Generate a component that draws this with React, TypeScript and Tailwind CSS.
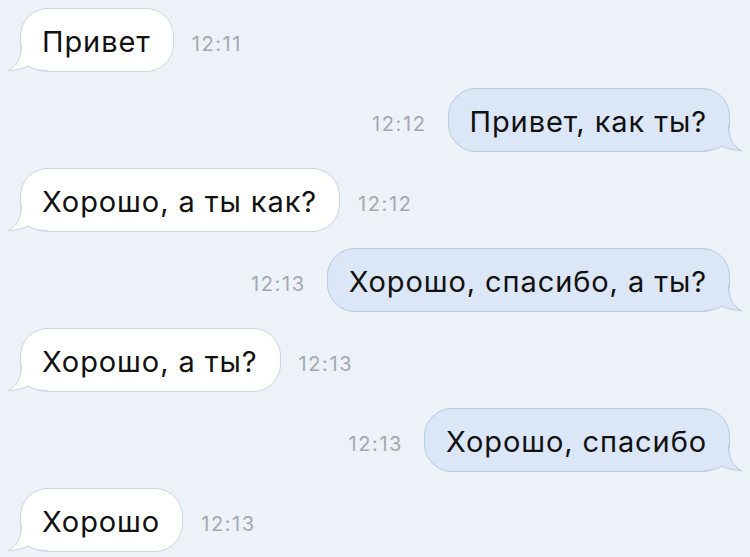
import React from "react";

type Msg = { text: string; time: string; out: boolean };

const msgs: Msg[] = [
  { text: "Привет", time: "12:11", out: false },
  { text: "Привет, как ты?", time: "12:12", out: true },
  { text: "Хорошо, а ты как?", time: "12:12", out: false },
  { text: "Хорошо, спасибо, а ты?", time: "12:13", out: true },
  { text: "Хорошо, а ты?", time: "12:13", out: false },
  { text: "Хорошо, спасибо", time: "12:13", out: true },
  { text: "Хорошо", time: "12:13", out: false },
];

function Tail({ out }: { out: boolean }) {
  const fill = out ? "#dbe6f6" : "#ffffff";
  const stroke = out ? "#b8c8df" : "#cdd3dc";
  return (
    <svg
      width="50"
      height="40"
      viewBox="0 0 50 40"
      className={
        out
          ? "absolute right-[-15px] bottom-[-2px] scale-x-[-1]"
          : "absolute left-[-15px] bottom-[-2px]"
      }
    >
      <path
        d="M15.5 12 C15.5 25 11 33 2.5 37.6 C10 37.6 17 35.5 22 33 C26 35.5 31 37.5 41 37.5 L41 12 Z"
        fill={fill}
      />
      <path
        d="M15.5 12 C15.5 25 11 33 2.5 37.6 C10 37.6 17 35.5 22 33 C26 35.5 31 37.5 41 37.5"
        fill="none"
        stroke={stroke}
        strokeWidth="1"
      />
    </svg>
  );
}

function Bubble({ m }: { m: Msg }) {
  return (
    <div
      className={
        m.out
          ? "relative h-16 flex items-center pl-[21px] pr-[22px] rounded-[28px] bg-[#dbe6f6] border border-[#b8c8df]"
          : "relative h-16 flex items-center pl-[21px] pr-[22px] rounded-[28px] bg-white border border-[#cdd3dc]"
      }
    >
      <Tail out={m.out} />
      <span className="relative z-10 text-[29px] text-[#111111] leading-none tracking-[0.9px] pt-[3px]">
        {m.text}
      </span>
    </div>
  );
}

function Time({ t }: { t: string }) {
  return (
    <span className="text-[20px] text-[#a3a8b0] leading-none pt-[8px] tracking-[1.6px]">
      {t}
    </span>
  );
}

export default function App() {
  return (
    <div
      className="w-[750px] h-[557px] overflow-hidden bg-[#edf1f8] flex flex-col gap-4 pt-2 px-5"
      style={{ fontFamily: "Inter, 'Liberation Sans', sans-serif" }}
    >
      {msgs.map((m, i) =>
        m.out ? (
          <div key={i} className="flex items-center justify-end gap-[21px]">
            <Time t={m.time} />
            <Bubble m={m} />
          </div>
        ) : (
          <div key={i} className="flex items-center justify-start gap-[18px]">
            <Bubble m={m} />
            <Time t={m.time} />
          </div>
        )
      )}
    </div>
  );
}
